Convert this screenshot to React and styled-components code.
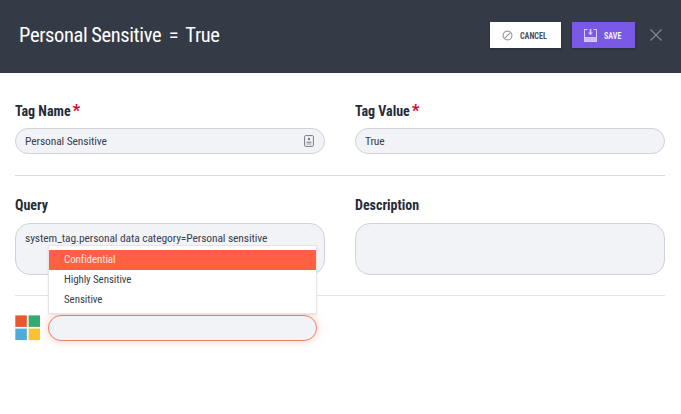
import React from "react";
import styled, { createGlobalStyle } from "styled-components";

const Global = createGlobalStyle`
  html, body { margin: 0; padding: 0; background: #fff; }
  body { font-family: Roboto, "Liberation Sans", sans-serif; font-stretch: condensed; }
  * { box-sizing: border-box; }
`;

const Page = styled.div`
  width: 681px;
  height: 414px;
  overflow: hidden;
  background: #fff;
`;

const Header = styled.header`
  height: 73px;
  background: #343b47;
  display: flex;
  align-items: center;
  padding: 0 19px;
`;

const Title = styled.h1`
  margin: -3px 0 0;
  flex: 1;
  font-size: 20.5px;
  font-weight: 400;
  letter-spacing: -0.35px;
  word-spacing: -0.6px;
  color: #fff;
  white-space: pre;
`;

const Actions = styled.div`
  display: flex;
  align-items: center;
  margin-top: -3px;
`;

const Button = styled.button`
  height: 26px;
  width: ${p => p.$width}px;
  margin-right: ${p => p.$gap}px;
  border: 0;
  padding: 0;
  display: flex;
  align-items: center;
  justify-content: center;
  gap: 7px;
  font-family: inherit;
  font-stretch: condensed;
  font-size: 9.5px;
  font-weight: 700;
  background: ${p => p.$bg};
  color: ${p => p.$fg};
  box-shadow: 0 1px 2px rgba(0,0,0,.3);
`;

const ButtonText = styled.span`
  display: inline-block;
  width: ${p => p.$width}px;
  white-space: nowrap;
  transform: scaleX(0.85);
  transform-origin: left center;
`;

const Close = styled.button`
  border: 0;
  background: none;
  padding: 0;
  width: 14px;
  height: 14px;
  display: flex;
  margin-right: -1px;
`;

const Form = styled.main`
  padding: 27px 16px 0 15px;
`;

const Row = styled.section`
  display: grid;
  grid-template-columns: 310px 310px;
  column-gap: 30px;
  padding-bottom: ${p => p.$pb}px;
  margin-bottom: ${p => p.$mb}px;
  border-bottom: 1px solid ${p => p.$line};
`;

const Field = styled.div`
  display: flex;
  flex-direction: column;
  min-width: 0;
`;

const Label = styled.label`
  height: 20px;
  margin-bottom: 8px;
  font-size: 14px;
  line-height: 20px;
  font-weight: 700;
  color: #262c38;
  white-space: nowrap;
`;

const Star = styled.span`
  color: #d8083a;
  font-size: 17px;
  font-weight: 700;
  margin-left: 2px;
`;

const Input = styled.div`
  height: 26px;
  padding: 0 10px 0 9px;
  border-radius: 13px;
  border: 1px solid #cfd2da;
  background: #f2f3f7;
  display: flex;
  align-items: center;
  justify-content: space-between;
  font-size: 11.5px;
  letter-spacing: -0.1px;
  color: #3a404c;
`;

const TextArea = styled.div`
  height: 52px;
  padding: 6px 10px 0 9px;
  border-radius: 15px;
  border: 1px solid #cfd2da;
  background: #f2f3f7;
  font-size: 11.5px;
  line-height: 16px;
  letter-spacing: -0.1px;
  color: #3a404c;
`;

const IconRow = styled.div`
  display: flex;
  gap: 8px;
  align-items: flex-start;
`;

const SelectWrap = styled.div`
  position: relative;
  width: 269px;
`;

const ActiveInput = styled.div`
  height: 26px;
  border-radius: 13px;
  border: 1px solid #e8836f;
  background: #f2f3f7;
  box-shadow: 0 0 8px rgba(255,94,64,.35);
`;

const Menu = styled.ul`
  position: absolute;
  left: 0;
  right: 0;
  bottom: 27px;
  height: 69px;
  margin: 0;
  padding: 4px 0 0;
  list-style: none;
  background: #fff;
  border: 1px solid #e4e5e9;
  box-shadow: 0 1px 2px rgba(0,0,0,.08);
`;

const Option = styled.li`
  height: 20px;
  padding-left: 15px;
  font-size: 11px;
  line-height: 20px;
  letter-spacing: -0.1px;
  background: ${p => (p.$active ? "#ff5f43" : "transparent")};
  color: ${p => (p.$active ? "#ffe9e0" : "#3a404c")};
`;

const Cancel = () => (
  <svg width="11" height="11" viewBox="0 0 12 12" fill="none" stroke="#9a9da3" strokeWidth="1.3">
    <circle cx="6" cy="6" r="4.8" />
    <path d="M2.7 9.3 9.3 2.7" />
  </svg>
);

const Save = () => (
  <svg width="13" height="13" viewBox="0 0 13 13">
    <path d="M0 0h3.5v1H1v7h11V1H9.5V0H13v13H0z" fill="#d9cdfb" />
    <path d="M5.7 0h1.6v3.5H9L6.5 6.3 4 3.5h1.7z" fill="#d9cdfb" />
    <path d="M1 8.6h11V12H1z" fill="#cbbaf8" />
  </svg>
);

const X = () => (
  <svg width="14" height="14" viewBox="0 0 14 14" stroke="#7f848d" strokeWidth="1.4">
    <path d="M1.5 1.5 12.5 12.5M12.5 1.5 1.5 12.5" />
  </svg>
);

const Contact = () => (
  <svg width="10" height="12" viewBox="0 0 10 12" fill="none">
    <rect x="0.6" y="0.6" width="8.8" height="10.8" rx="1" stroke="#74787f" />
    <circle cx="5" cy="4" r="1.2" fill="#74787f" />
    <path d="M2.6 6.5h4.8v1.4H2.6zM2.6 8.6h4.8v.9H2.6z" fill="#9a9da3" />
  </svg>
);

const Logo = () => (
  <svg width="25" height="26" viewBox="0 0 25 26">
    <rect x="0.3" y="0.4" width="11.5" height="11.5" fill="#e9572b" />
    <rect x="13.6" y="0.4" width="11.4" height="11.5" fill="#35ab6f" />
    <rect x="0.3" y="13.6" width="11.5" height="11.5" fill="#4fabdc" />
    <rect x="13.6" y="13.6" width="11.4" height="11.5" fill="#fcc230" />
  </svg>
);

export default function App() {
  return (
    <Page>
      <Global />
      <Header>
        <Title>Personal Sensitive  =  True</Title>
        <Actions>
          <Button $width={71} $gap={11} $bg="#fff" $fg="#4a4f59"><Cancel /><ButtonText $width={29}>CANCEL</ButtonText></Button>
          <Button $width={63} $gap={14} $bg="#7a58e6" $fg="#f1ecff"><Save /><ButtonText $width={19}>SAVE</ButtonText></Button>
          <Close aria-label="Close"><X /></Close>
        </Actions>
      </Header>
      <Form>
        <Row $pb={21} $mb={19} $line="#d9d9e6">
          <Field>
            <Label>Tag Name<Star>*</Star></Label>
            <Input>Personal Sensitive<Contact /></Input>
          </Field>
          <Field>
            <Label>Tag Value<Star>*</Star></Label>
            <Input>True</Input>
          </Field>
        </Row>
        <Row $pb={20} $mb={19} $line="#e4e4e4">
          <Field>
            <Label>Query</Label>
            <TextArea>system_tag.personal data category=Personal sensitive</TextArea>
          </Field>
          <Field>
            <Label>Description</Label>
            <TextArea />
          </Field>
        </Row>
        <IconRow>
          <Logo />
          <SelectWrap>
            <ActiveInput />
            <Menu>
              <Option $active>Confidential</Option>
              <Option>Highly Sensitive</Option>
              <Option>Sensitive</Option>
            </Menu>
          </SelectWrap>
        </IconRow>
      </Form>
    </Page>
  );
}
